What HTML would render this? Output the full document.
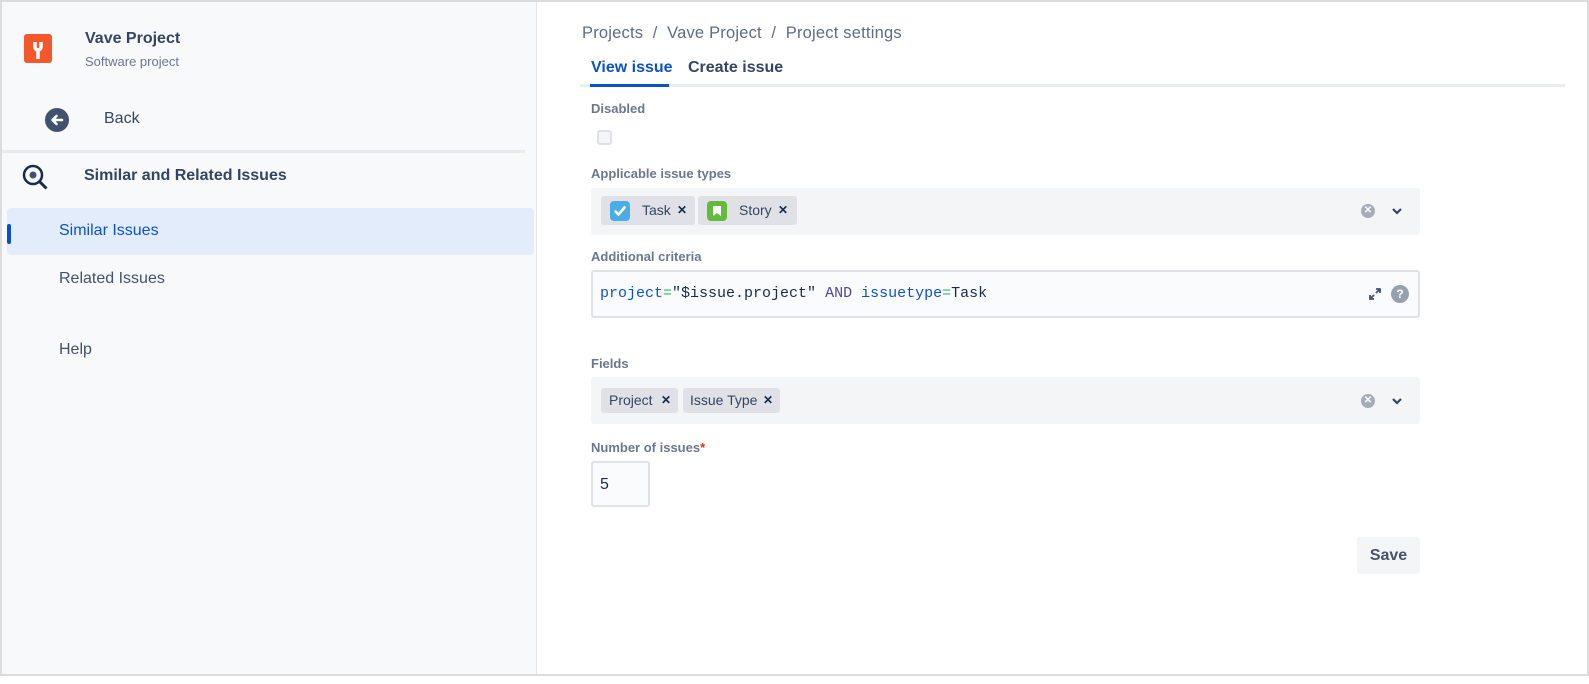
<!DOCTYPE html>
<html><head><meta charset="utf-8"><style>
*{box-sizing:border-box;margin:0;padding:0}
body{width:1589px;height:684px;overflow:hidden;background:#fff;font-family:"Liberation Sans",sans-serif;position:relative;color:#172b4d}
.frame{position:absolute;left:0;top:0;width:1589px;height:676px;border:2px solid #dcdcdc}
.abs{position:absolute;white-space:nowrap}
.side{position:absolute;left:2px;top:2px;width:535px;height:672px;background:#f8f9fb;border-right:1px solid #e4e6ea}
.lbl{font-size:13px;font-weight:bold;color:#6b778c}
.sel{position:absolute;left:591px;width:829px;height:47px;background:#f4f5f7;border-radius:3px}
.chip{position:absolute;top:8px;height:29px;background:#dfe1e6;border-radius:3px;font-size:14px;color:#344563;line-height:29px}
.x{position:absolute;font-size:12px;font-weight:bold;color:#172b4d}
.clr{position:absolute;width:14px;height:14px;border-radius:50%;background:#a5adba;color:#fff;font-size:10px;font-weight:bold;text-align:center;line-height:14px}
</style></head><body>
<div class="side"></div>
<div class="abs" style="left:24px;top:34px;width:28px;height:29px;background:#f3582d;border-radius:3px"></div>
<svg class="abs" style="left:24px;top:34px" width="28" height="29"><path d="M11 8v5a3 3 0 0 0 6 0V8M14 15v10" stroke="#fff" stroke-width="3.5" fill="none"/></svg>
<div class="abs" style="left:85px;top:30px;font-size:16px;font-weight:bold;color:#344563">Vave Project</div>
<div class="abs" style="left:85px;top:54px;font-size:13px;color:#6b778c">Software project</div>
<div class="abs" style="left:45px;top:108px;width:24px;height:24px;border-radius:50%;background:#42526e"></div>
<svg class="abs" style="left:45px;top:108px" width="24" height="24"><path d="M17 12H8M11.5 8L7.5 12l4 4" stroke="#fff" stroke-width="2.6" fill="none" stroke-linecap="round" stroke-linejoin="round"/></svg>
<div class="abs" style="left:104px;top:110px;font-size:16px;color:#344563">Back</div>
<div class="abs" style="left:2px;top:150px;width:523px;height:3px;background:#e8eaee"></div>
<svg class="abs" style="left:22px;top:164px" width="28" height="28"><circle cx="11" cy="11" r="9" stroke="#172b4d" stroke-width="2.5" fill="none"/><path d="M17.5 17.5l7 7" stroke="#172b4d" stroke-width="3"/><circle cx="11" cy="11" r="3.5" fill="#42526e"/></svg>
<div class="abs" style="left:84px;top:167px;font-size:16px;font-weight:bold;color:#344563">Similar and Related Issues</div>
<div class="abs" style="left:7px;top:208px;width:527px;height:47px;background:#e3ecfb;border-radius:4px"></div>
<div class="abs" style="left:7px;top:224px;width:4px;height:20px;background:#0b4fd0;border-radius:2px"></div>
<div class="abs" style="left:59px;top:222px;font-size:16px;color:#0b52cc">Similar Issues</div>
<div class="abs" style="left:59px;top:270px;font-size:16px;color:#42526e">Related Issues</div>
<div class="abs" style="left:59px;top:341px;font-size:16px;color:#42526e">Help</div>

<div class="abs" style="left:582px;top:24px;font-size:16.5px;color:#5e6c84;letter-spacing:0.2px">Projects &nbsp;/&nbsp; Vave Project &nbsp;/&nbsp; Project settings</div>
<div class="abs" style="left:580px;top:84px;width:985px;height:3px;background:#ebecf0"></div>
<div class="abs" style="left:591px;top:59px;font-size:16px;font-weight:bold;color:#0b52cc">View issue</div>
<div class="abs" style="left:590px;top:84px;width:79px;height:3px;background:#0b52cc"></div>
<div class="abs" style="left:688px;top:59px;font-size:16px;font-weight:bold;color:#344563">Create issue</div>

<div class="abs lbl" style="left:591px;top:101px">Disabled</div>
<div class="abs" style="left:597px;top:130px;width:15px;height:15px;border:2px solid #dfe1e6;border-radius:3px;background:#f4f5f7"></div>
<div class="abs lbl" style="left:591px;top:166px">Applicable issue types</div>
<div class="sel" style="top:188px">
 <div class="chip" style="left:10px;width:94px"><div class="abs" style="left:9px;top:5px;width:20px;height:20px;background:#4bade8;border-radius:4px"></div><svg class="abs" style="left:9px;top:5px" width="20" height="20"><path d="M5.5 10.5l3 3 6-7" stroke="#fff" stroke-width="2.6" fill="none" stroke-linecap="round"/></svg><span class="abs" style="left:41px;top:0">Task</span><span class="x" style="left:76px;top:0">✕</span></div>
 <div class="chip" style="left:107px;width:99px"><div class="abs" style="left:9px;top:5px;width:20px;height:20px;background:#63ba3c;border-radius:4px"><div style="position:absolute;left:6px;top:5px;width:8px;height:10px;background:#fff;clip-path:polygon(0 0,100% 0,100% 100%,50% 70%,0 100%)"></div></div><span class="abs" style="left:41px;top:0">Story</span><span class="x" style="left:80px;top:0">✕</span></div>
 <div class="clr" style="left:770px;top:16px">✕</div>
 <svg class="abs" style="left:800px;top:19px" width="12" height="10"><path d="M2 2l4 4 4-4" stroke="#344563" stroke-width="2.2" fill="none"/></svg>
</div>
<div class="abs lbl" style="left:591px;top:249px">Additional criteria</div>
<div class="abs" style="left:591px;top:270px;width:829px;height:48px;border:2px solid #dfe1e6;border-radius:3px;background:#fafbfc"></div>
<div class="abs" style="left:600px;top:285px;font-family:'Liberation Mono',monospace;font-size:15px"><span style="color:#0b52cc">project</span><span style="color:#36b37e">=</span><span style="color:#172b4d">"$issue.project"</span> <span style="color:#5243aa">AND</span> <span style="color:#0b52cc">issuetype</span><span style="color:#36b37e">=</span><span style="color:#172b4d">Task</span></div>
<svg class="abs" style="left:1368px;top:287px" width="14" height="14"><path d="M8 2h4v4M12 2L8 6M6 12H2V8M2 12l4-4" stroke="#42526e" stroke-width="1.8" fill="none"/></svg>
<div class="abs" style="left:1391px;top:285px;width:18px;height:18px;border-radius:50%;background:#97a0af;color:#fff;font-size:12px;font-weight:bold;text-align:center;line-height:18px">?</div>

<div class="abs lbl" style="left:591px;top:356px">Fields</div>
<div class="sel" style="top:377px">
 <div class="chip" style="left:10px;width:77px;top:11px;height:25px;line-height:25px"><span class="abs" style="left:8px;top:0">Project</span><span class="x" style="left:60px;top:0">✕</span></div>
 <div class="chip" style="left:92px;width:97px;top:11px;height:25px;line-height:25px"><span class="abs" style="left:7px;top:0">Issue Type</span><span class="x" style="left:80px;top:0">✕</span></div>
 <div class="clr" style="left:770px;top:17px">✕</div>
 <svg class="abs" style="left:800px;top:20px" width="12" height="10"><path d="M2 2l4 4 4-4" stroke="#344563" stroke-width="2.2" fill="none"/></svg>
</div>
<div class="abs lbl" style="left:591px;top:440px">Number of issues<span style="color:#de350b">*</span></div>
<div class="abs" style="left:591px;top:461px;width:59px;height:46px;border:2px solid #dfe1e6;border-radius:3px;background:#fafbfc;font-size:16px;padding:13px 0 0 7px;color:#172b4d">5</div>
<div class="abs" style="left:1357px;top:537px;width:63px;height:37px;background:#f4f5f7;border-radius:3px;font-size:16px;font-weight:bold;color:#42526e;text-align:center;line-height:37px">Save</div>
<div class="frame"></div>
</body></html>
